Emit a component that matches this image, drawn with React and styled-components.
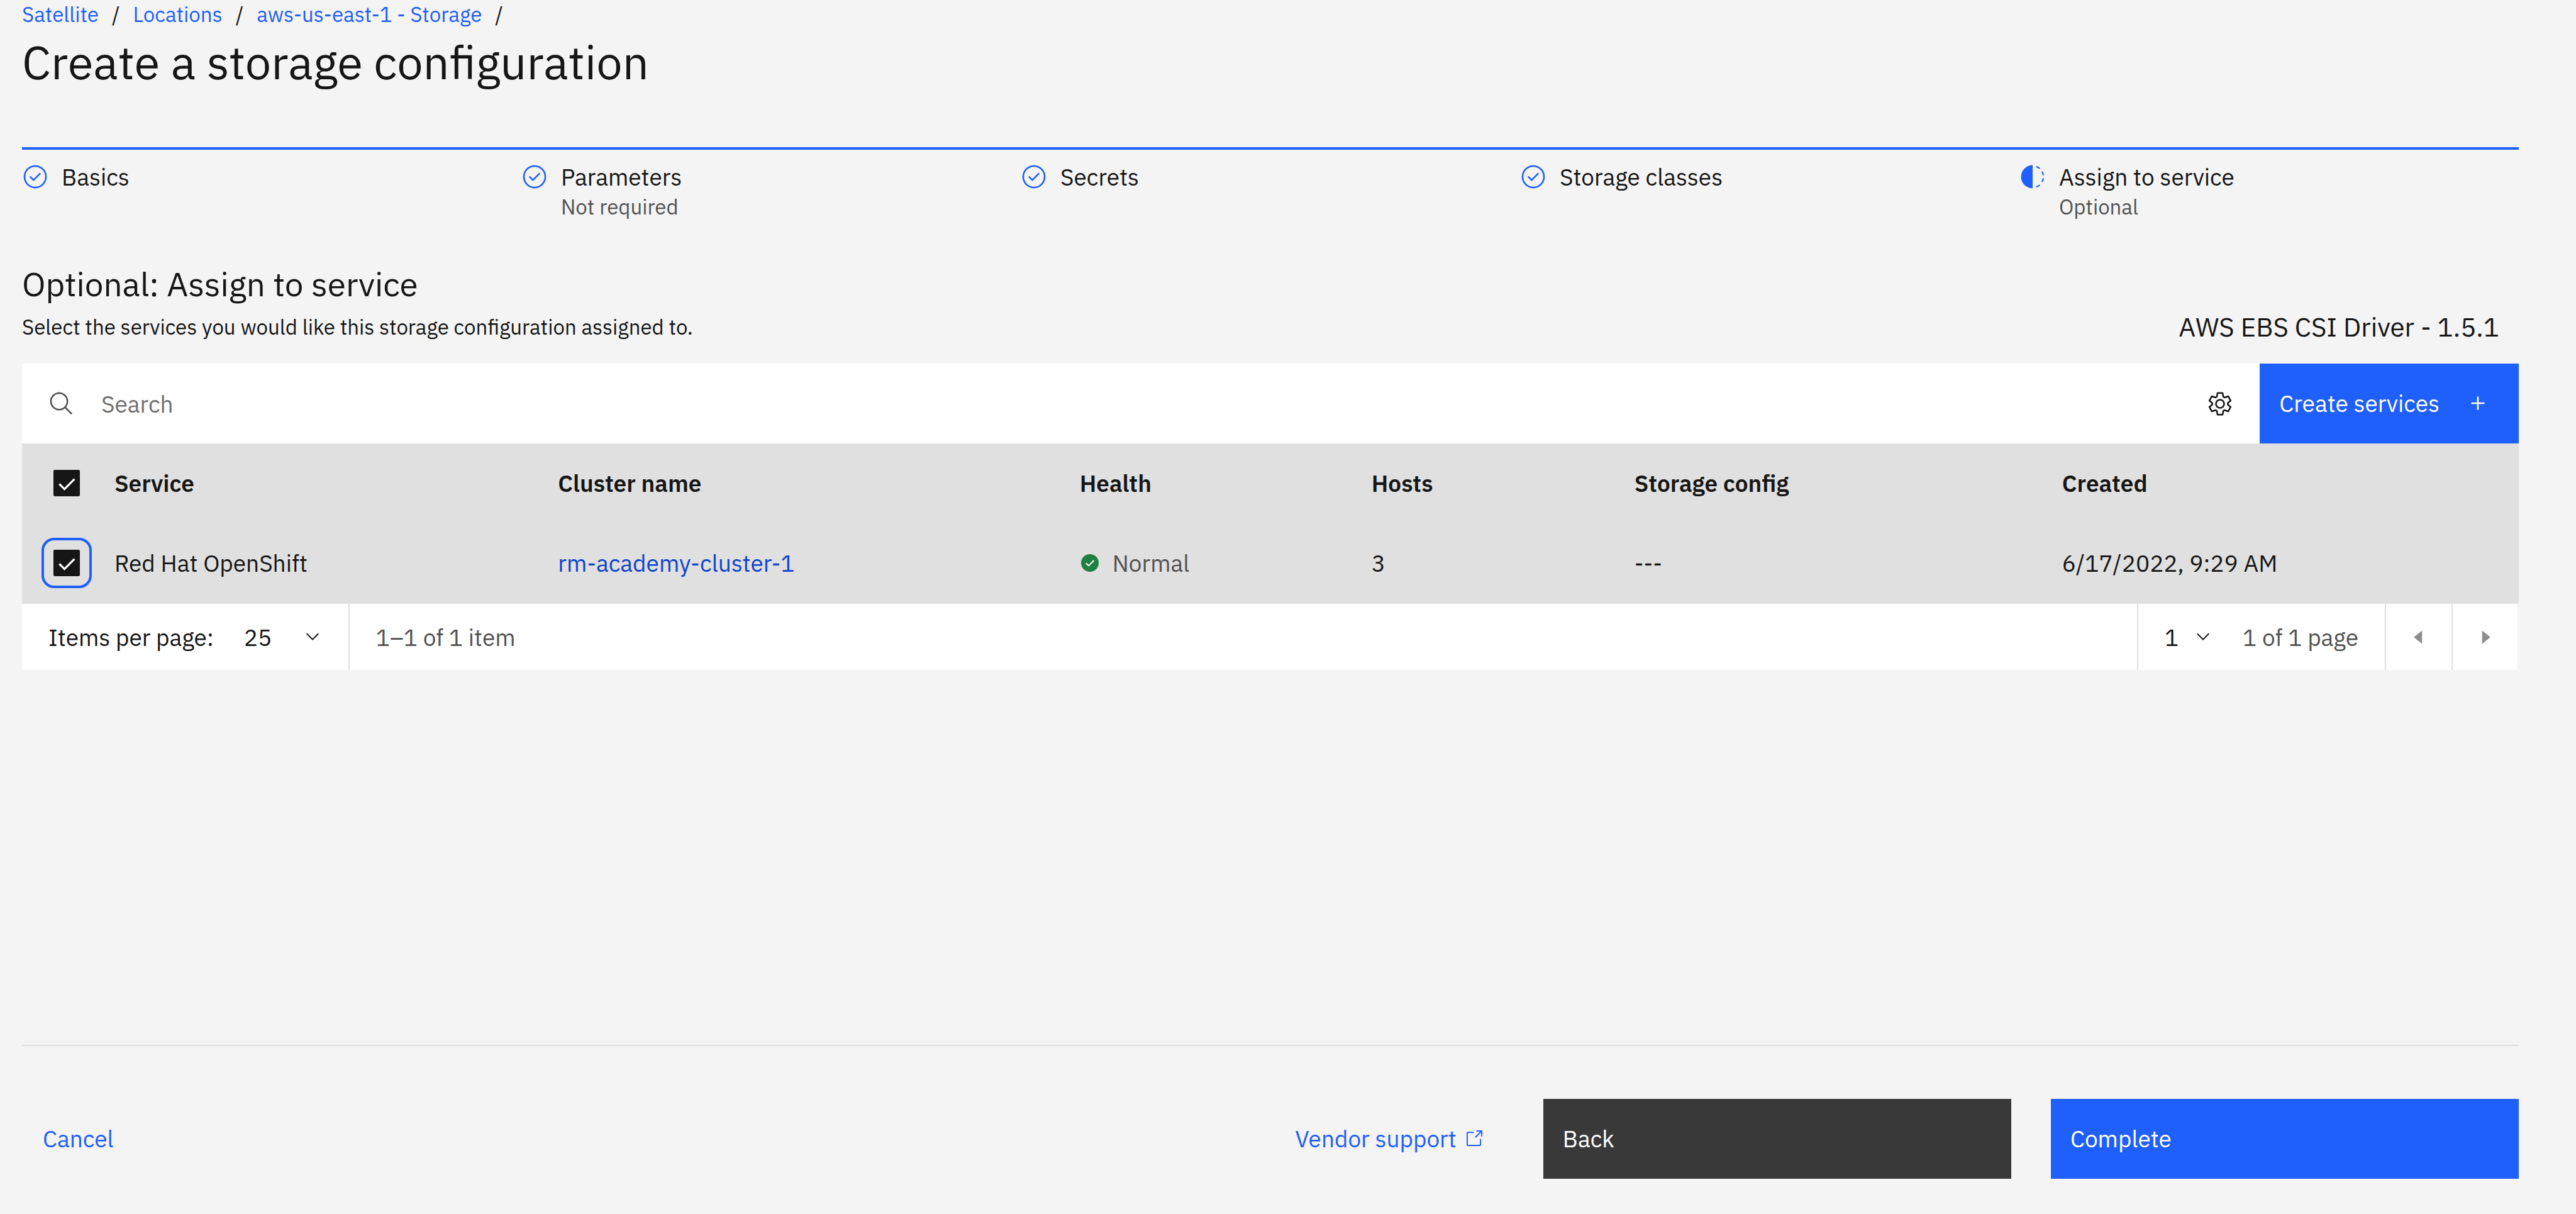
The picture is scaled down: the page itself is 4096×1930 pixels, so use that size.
import React, { useState } from "react";
import styled, { createGlobalStyle } from "styled-components";

const color = {
  page: "#f4f4f4",
  layer: "#ffffff",
  row: "#e0e0e0",
  text: "#161616",
  textSoft: "#525252",
  placeholder: "#6f6f6f",
  blue: "#1f5ffb",
  link: "#0f43ce",
  dark: "#393939",
  disabled: "#8d8d8d",
  green: "#1f8040",
};

const GlobalStyle = createGlobalStyle`
  *, *::before, *::after { box-sizing: border-box; }
  body {
    margin: 0;
    background: ${color.page};
    color: ${color.text};
    font-family: "IBM Plex Sans", Roboto, "Liberation Sans", sans-serif;
    font-size: 37px;
    line-height: 42px;
  }
  button, input, select { font: inherit; color: inherit; border: 0; border-radius: 0; margin: 0; padding: 0; background: none; }
  a { text-decoration: none; }
`;

/* ---------- icons ---------- */

const Svg = styled.svg`
  display: block;
  flex: none;
  width: ${(p) => p.$size || 42}px;
  height: ${(p) => p.$size || 42}px;
`;

const StepDone = () => (
  <Svg viewBox="0 0 32 32" fill={color.blue} aria-hidden="true">
    <path d="M14 21.414L9 16.413 10.413 15 14 18.586 21.585 11 23 12.415z" />
    <path d="M16 2A14 14 0 1 0 30 16 14 14 0 0 0 16 2Zm0 26A12 12 0 1 1 28 16 12 12 0 0 1 16 28Z" />
  </Svg>
);

const arcPoint = (deg, r) => {
  const a = (deg * Math.PI) / 180;
  return `${(r * Math.cos(a)).toFixed(2)} ${(r * Math.sin(a)).toFixed(2)}`;
};

const StepCurrent = () => (
  <Svg viewBox="-66 -66 132 132" aria-hidden="true">
    <path d="M0 -58A58 58 0 0 0 0 58Z" fill={color.blue} />
    {[[-70, -49], [-29, -8], [8, 29], [49, 70]].map(([a, b]) => (
      <path
        key={a}
        d={`M${arcPoint(a, 54)}A54 54 0 0 1 ${arcPoint(b, 54)}`}
        fill="none"
        stroke={color.blue}
        strokeWidth="7"
      />
    ))}
  </Svg>
);

const SearchIcon = () => (
  <Svg viewBox="0 0 32 32" fill={color.textSoft} aria-hidden="true">
    <path d="M29 27.586l-7.552-7.552a11.018 11.018 0 1 0-1.414 1.414L27.586 29ZM4 13a9 9 0 1 1 9 9A9.01 9.01 0 0 1 4 13Z" />
  </Svg>
);

const gearPoints = [0, 60, 120, 180, 240, 300]
  .map((t) =>
    [[-25, 12.9], [-13, 18.5], [13, 18.5], [25, 12.9]]
      .map(([d, r]) => arcPoint(t - 90 + d, r))
      .join(" ")
  )
  .join(" ");

const GearIcon = () => (
  <Svg viewBox="-22 -22 44 44" fill="none" stroke={color.text} strokeWidth="2.7" strokeLinejoin="round" aria-hidden="true">
    <polygon points={gearPoints} />
    <circle r="6.8" />
  </Svg>
);

const AddIcon = () => (
  <Svg viewBox="0 0 32 32" fill="#fff" aria-hidden="true">
    <path d="M17 15V8h-2v7H8v2h7v7h2v-7h7v-2z" />
  </Svg>
);

const HealthyIcon = () => (
  <Svg $size={32} viewBox="0 0 16 16" aria-hidden="true">
    <circle cx="8" cy="8" r="7" fill={color.green} />
    <path d="M4.9 8.1L7 10.2 11.2 6" fill="none" stroke="#fff" strokeWidth="1" />
  </Svg>
);

const ChevronIcon = () => (
  <Svg $size={32} viewBox="0 0 16 16" fill={color.text} aria-hidden="true">
    <path d="M8 11L3 6 3.7 5.3 8 9.6 12.3 5.3 13 6z" />
  </Svg>
);

const CaretIcon = ({ right }) => (
  <Svg viewBox="0 0 32 32" fill={color.disabled} aria-hidden="true">
    <path d={right ? "M12 8L22 16 12 24z" : "M20 24L10 16 20 8z"} />
  </Svg>
);

const LaunchIcon = () => (
  <Svg $size={25} viewBox="0 0 78 78" fill="none" stroke="currentColor" strokeWidth="6" aria-hidden="true">
    <path d="M36 10H6a3 3 0 0 0-3 3V72a3 3 0 0 0 3 3H66a3 3 0 0 0 3-3V43" />
    <path d="M48 3H75V31M43 35L74 4" />
  </Svg>
);

/* ---------- page frame ---------- */

const Page = styled.div`
  min-height: 100vh;
  display: flex;
  flex-direction: column;
  padding: 0 91px 56px 35px;
`;

const Breadcrumb = styled.ol`
  display: flex;
  margin: 0;
  padding: 0;
  list-style: none;
  font-size: 33px;
  line-height: 46px;

  li::after {
    content: "/";
    margin: 0 21px;
  }
`;

const BlueLink = styled.a`
  color: ${color.blue};
`;

const Title = styled.h1`
  margin: 4px 0 88px;
  font-size: 74px;
  font-weight: 400;
  line-height: 96px;
`;

/* ---------- progress ---------- */

const Steps = styled.ol`
  display: grid;
  grid-template-columns: repeat(5, 1fr);
  margin: 0;
  padding: 22px 0 0;
  list-style: none;
  border-top: 4px solid ${color.blue};
`;

const Step = styled.li`
  display: flex;
  align-items: flex-start;
  gap: 21px;
`;

const StepNote = styled.div`
  margin-top: 5px;
  font-size: 33px;
  line-height: 44px;
  color: ${color.textSoft};
`;

/* ---------- section head ---------- */

const SectionTitle = styled.h2`
  margin: 69px 0 14px;
  font-size: 53px;
  font-weight: 400;
  line-height: 64px;
`;

const SectionIntro = styled.div`
  display: flex;
  justify-content: space-between;
  margin-bottom: 36px;
  padding-right: 31px;
  line-height: 44px;

  p { margin: 0; }
`;

const Hint = styled.p`
  font-size: 33px;
`;

const DriverName = styled.p`
  font-size: 42px;
`;

/* ---------- toolbar ---------- */

const Toolbar = styled.div`
  display: flex;
  height: 127px;
  background: ${color.layer};
`;

const SearchField = styled.label`
  flex: 1;
  display: flex;
  align-items: center;
  gap: 42px;
  padding-left: 42px;
`;

const SearchInput = styled.input`
  flex: 1;
  height: 100%;
  outline: none;
  &::placeholder { color: ${color.placeholder}; opacity: 1; }
`;

const IconButton = styled.button`
  display: grid;
  place-items: center;
  width: ${(p) => p.$width || 127}px;
`;

const Button = styled.button`
  flex: ${(p) => (p.$grow ? "1" : "none")};
  display: flex;
  align-items: center;
  gap: 40px;
  height: 127px;
  padding: 0 44px 2px 31px;
  color: #fff;
  background: ${(p) => (p.$dark ? color.dark : color.blue)};
`;

/* ---------- table ---------- */

const Table = styled.table`
  width: 100%;
  table-layout: fixed;
  border-collapse: collapse;
  background: ${color.row};
  text-align: left;

  th, td { padding: 0 0 2px; vertical-align: middle; }
  th { height: 127px; font-weight: 600; }
  td { height: 128px; }
`;

const Col = styled.col`
  width: ${(p) => p.$width};
`;

const CheckBox = styled.label`
  position: relative;
  display: block;
  width: 42px;
  height: 42px;
  margin-left: 50px;

  input {
    appearance: none;
    display: block;
    width: 42px;
    height: 42px;
    border: 3px solid ${color.text};
    border-radius: 2px;
    outline: none;
  }
  input:checked { background: ${color.text}; }
  svg { position: absolute; inset: 0; pointer-events: none; }

  &::after {
    content: "";
    display: ${(p) => (p.$ring ? "block" : "none")};
    position: absolute;
    inset: -19px;
    border: 4px solid ${color.blue};
    border-radius: 20px;
    pointer-events: none;
  }
`;

const ClusterLink = styled.a`
  color: ${color.link};
`;

const Health = styled.span`
  display: flex;
  align-items: center;
  gap: 20px;
  color: ${color.textSoft};
`;

const Check = ({ label, ring }) => {
  const [on, setOn] = useState(true);
  return (
    <CheckBox $ring={ring}>
      <input type="checkbox" aria-label={label} checked={on} onChange={() => setOn(!on)} />
      {on && (
        <Svg viewBox="0 0 132 132" fill="none" stroke="#fff" strokeWidth="10" aria-hidden="true">
          <path d="M29 70L55 96L105 46" />
        </Svg>
      )}
    </CheckBox>
  );
};

/* ---------- pagination ---------- */

const Pagination = styled.div`
  display: flex;
  height: 105px;
  margin-right: 2px;
  background: ${color.layer};

  > * + * { border-left: 2px solid ${color.row}; }
`;

const PageCell = styled.div`
  flex: ${(p) => (p.$grow ? "1" : "none")};
  display: flex;
  align-items: center;
  gap: 6px;
  padding: 0 ${(p) => (p.$right ? 42 : 0)}px 0 ${(p) => (p.$left ? 42 : 0)}px;
  color: ${(p) => (p.$soft ? color.textSoft : color.text)};
`;

const SelectBox = styled.span`
  position: relative;
  align-self: stretch;
  width: ${(p) => p.$width}px;
  color: ${color.text};

  select {
    appearance: none;
    width: 100%;
    height: 100%;
    padding-left: 42px;
    outline: none;
  }
  svg {
    position: absolute;
    top: 36px;
    right: 41px;
    pointer-events: none;
  }
`;

/* ---------- footer ---------- */

const Footer = styled.footer`
  display: flex;
  align-items: center;
  margin-top: auto;
  padding: 84px 0 0 33px;
  border-top: 2px solid ${color.row};
`;

const CancelButton = styled.button`
  margin-right: auto;
  padding-bottom: 2px;
  color: ${color.blue};
`;

const VendorLink = styled(BlueLink)`
  display: flex;
  align-items: center;
  gap: 16px;
  margin-right: 97px;
  padding-bottom: 2px;
`;

const ButtonPair = styled.div`
  display: flex;
  gap: 63px;
  width: 39.4%;
`;

const steps = [
  { name: "Basics" },
  { name: "Parameters", note: "Not required" },
  { name: "Secrets" },
  { name: "Storage classes" },
  { name: "Assign to service", note: "Optional", current: true },
];

const columns = [
  { width: "3.7%" },
  { name: "Service", width: "17.77%" },
  { name: "Cluster name", width: "20.89%" },
  { name: "Health", width: "11.69%" },
  { name: "Hosts", width: "10.53%" },
  { name: "Storage config", width: "17.13%" },
  { name: "Created", width: "auto" },
];

export default function App() {
  return (
    <>
      <GlobalStyle />
      <Page>
        <nav aria-label="Breadcrumb">
          <Breadcrumb>
            {["Satellite", "Locations", "aws-us-east-1 - Storage"].map((t) => (
              <li key={t}><BlueLink href="#">{t}</BlueLink></li>
            ))}
          </Breadcrumb>
        </nav>
        <Title>Create a storage configuration</Title>

        <Steps>
          {steps.map((s) => (
            <Step key={s.name} aria-current={s.current ? "step" : undefined}>
              {s.current ? <StepCurrent /> : <StepDone />}
              <div>
                {s.name}
                {s.note && <StepNote>{s.note}</StepNote>}
              </div>
            </Step>
          ))}
        </Steps>

        <main>
          <SectionTitle>Optional: Assign to service</SectionTitle>
          <SectionIntro>
            <Hint>Select the services you would like this storage configuration assigned to.</Hint>
            <DriverName>AWS EBS CSI Driver - 1.5.1</DriverName>
          </SectionIntro>

          <Toolbar>
            <SearchField>
              <SearchIcon />
              <SearchInput type="text" placeholder="Search" aria-label="Search" />
            </SearchField>
            <IconButton type="button" aria-label="Settings"><GearIcon /></IconButton>
            <Button type="button">Create services <AddIcon /></Button>
          </Toolbar>

          <Table>
            <colgroup>
              {columns.map((c) => <Col key={c.width} $width={c.width} />)}
            </colgroup>
            <thead>
              <tr>
                <th><Check label="Select all rows" /></th>
                {columns.slice(1).map((c) => <th key={c.name} scope="col">{c.name}</th>)}
              </tr>
            </thead>
            <tbody>
              <tr>
                <td><Check label="Select row" ring /></td>
                <td>Red Hat OpenShift</td>
                <td><ClusterLink href="#">rm-academy-cluster-1</ClusterLink></td>
                <td><Health><HealthyIcon />Normal</Health></td>
                <td>3</td>
                <td>---</td>
                <td>6/17/2022, 9:29 AM</td>
              </tr>
            </tbody>
          </Table>

          <Pagination>
            <PageCell $left>
              <label htmlFor="page-size">Items per page:</label>
              <SelectBox $width={208}>
                <select id="page-size" defaultValue="25">
                  <option>25</option>
                </select>
                <ChevronIcon />
              </SelectBox>
            </PageCell>
            <PageCell $grow $left $soft>1–1 of 1 item</PageCell>
            <PageCell $right $soft>
              <SelectBox $width={160}>
                <select aria-label="Page number" defaultValue="1">
                  <option>1</option>
                </select>
                <ChevronIcon />
              </SelectBox>
              1 of 1 page
            </PageCell>
            <IconButton type="button" $width={106} aria-label="Previous page"><CaretIcon /></IconButton>
            <IconButton type="button" $width={105} aria-label="Next page"><CaretIcon right /></IconButton>
          </Pagination>
        </main>

        <Footer>
          <CancelButton type="button">Cancel</CancelButton>
          <VendorLink href="#">Vendor support <LaunchIcon /></VendorLink>
          <ButtonPair>
            <Button type="button" $grow $dark>Back</Button>
            <Button type="button" $grow>Complete</Button>
          </ButtonPair>
        </Footer>
      </Page>
    </>
  );
}
